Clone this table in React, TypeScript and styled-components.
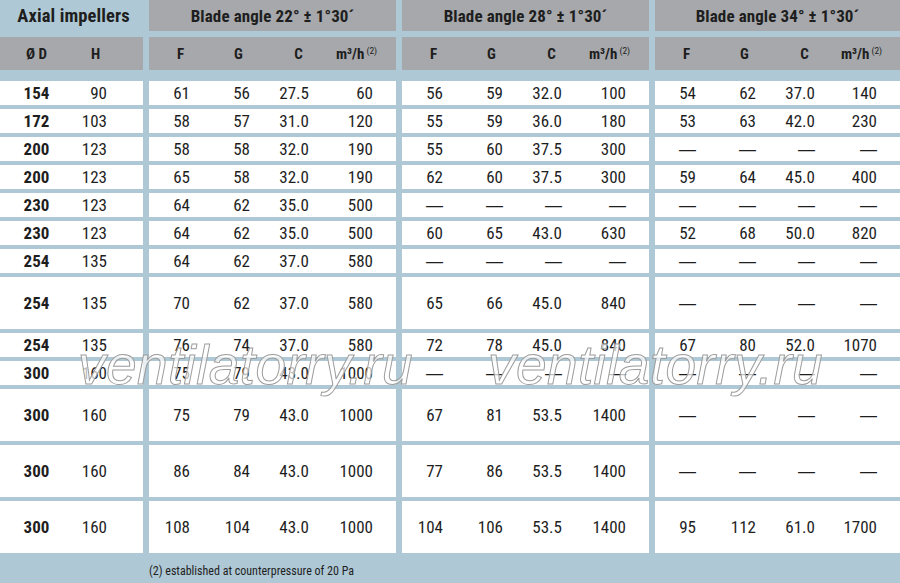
import React from "react";
import styled, { createGlobalStyle } from "styled-components";

const GlobalStyle = createGlobalStyle`
  html, body {
    margin: 0;
    padding: 0;
    background: #afc8d5;
  }
  body {
    font-family: Roboto, "Liberation Sans", sans-serif;
    font-stretch: 75%;
    color: #1e1e1e;
  }
`;

const Page = styled.div`
  position: relative;
  width: 900px;
  height: 583px;
  overflow: hidden;
  display: flex;
  flex-direction: column;
`;

const Row = styled.div<{ $h: number; $mb?: number }>`
  display: grid;
  grid-template-columns: 143px 247px 247px 1fr;
  column-gap: 6px;
  height: ${(p) => p.$h}px;
  margin-bottom: ${(p) => p.$mb ?? 4}px;
`;

const TopCell = styled.div<{ $plain?: boolean }>`
  display: flex;
  align-items: center;
  justify-content: center;
  background: ${(p) => (p.$plain ? "transparent" : "#a6a8ab")};
  font-weight: 700;
  font-size: ${(p) => (p.$plain ? 18.5 : 17)}px;
  letter-spacing: 0.1px;
  padding-left: ${(p) => (p.$plain ? 4 : 0)}px;
  white-space: nowrap;
`;

const Group = styled.div<{ $cols: string; $head?: boolean }>`
  display: grid;
  grid-template-columns: ${(p) => p.$cols};
  align-items: center;
  background: ${(p) => (p.$head ? "#a6a8ab" : "#ffffff")};
`;

const HeadCell = styled.div<{ $pr: number }>`
  text-align: center;
  padding-right: ${(p) => p.$pr}px;
  font-weight: 700;
  font-size: 15px;
  white-space: nowrap;
`;

const Sup = styled.sup`
  font-weight: 400;
  font-size: 9.5px;
  margin-left: 2px;
  vertical-align: 5px;
  line-height: 0;
`;

const Cell = styled.div<{ $align: "center" | "right"; $pr: number; $bold?: boolean }>`
  text-align: ${(p) => p.$align};
  padding-right: ${(p) => p.$pr}px;
  font-size: 17px;
  font-weight: ${(p) => (p.$bold ? 700 : 400)};
  white-space: nowrap;
`;

const Dash = styled.span`
  font-family: "Liberation Sans", sans-serif;
  font-stretch: 100%;
`;

const Footer = styled.div`
  flex: 1;
  padding: 11px 0 0 149px;
  font-size: 12px;
`;

const Watermark = styled.div<{ $left: number }>`
  position: absolute;
  top: 338px;
  left: ${(p) => p.$left}px;
  font-family: "Liberation Sans", Arial, sans-serif;
  font-stretch: 100%;
  font-style: italic;
  font-size: 55px;
  letter-spacing: 0.4px;
  line-height: 1;
  color: rgba(255, 255, 255, 0.7);
  -webkit-text-stroke: 1px #9c9c9c;
  pointer-events: none;
  white-space: nowrap;
`;

type V = string | number;
const D: V[] = ["—", "—", "—", "—"];

const rows: { d: number; h: number; g: V[][]; tall?: boolean }[] = [
  { d: 154, h: 90, g: [[61, 56, "27.5", 60], [56, 59, "32.0", 100], [54, 62, "37.0", 140]] },
  { d: 172, h: 103, g: [[58, 57, "31.0", 120], [55, 59, "36.0", 180], [53, 63, "42.0", 230]] },
  { d: 200, h: 123, g: [[58, 58, "32.0", 190], [55, 60, "37.5", 300], D] },
  { d: 200, h: 123, g: [[65, 58, "32.0", 190], [62, 60, "37.5", 300], [59, 64, "45.0", 400]] },
  { d: 230, h: 123, g: [[64, 62, "35.0", 500], D, D] },
  { d: 230, h: 123, g: [[64, 62, "35.0", 500], [60, 65, "43.0", 630], [52, 68, "50.0", 820]] },
  { d: 254, h: 135, g: [[64, 62, "37.0", 580], D, D] },
  { d: 254, h: 135, g: [[70, 62, "37.0", 580], [65, 66, "45.0", 840], D], tall: true },
  { d: 254, h: 135, g: [[76, 74, "37.0", 580], [72, 78, "45.0", 840], [67, 80, "52.0", 1070]] },
  { d: 300, h: 160, g: [[75, 79, "43.0", 1000], D, D] },
  { d: 300, h: 160, g: [[75, 79, "43.0", 1000], [67, 81, "53.5", 1400], D], tall: true },
  { d: 300, h: 160, g: [[86, 84, "43.0", 1000], [77, 86, "53.5", 1400], D], tall: true },
  { d: 300, h: 160, g: [[108, 104, "43.0", 1000], [104, 106, "53.5", 1400], [95, 112, "61.0", 1700]], tall: true },
];

const leftCols = "73px 1fr";
const angleCols = "63px 60px 59px 1fr";
const angles = ["22", "28", "34"];
const headPad = [0, 7, 6, 14];

const AngleHead = () => (
  <Group $cols={angleCols} $head>
    <HeadCell $pr={headPad[0]}>F</HeadCell>
    <HeadCell $pr={headPad[1]}>G</HeadCell>
    <HeadCell $pr={headPad[2]}>C</HeadCell>
    <HeadCell $pr={headPad[3]}>
      m³/h<Sup>(2)</Sup>
    </HeadCell>
  </Group>
);

export default function App() {
  return (
    <>
      <GlobalStyle />
      <Page>
        <Row $h={31} $mb={6}>
          <TopCell $plain>Axial impellers</TopCell>
          {angles.map((a) => (
            <TopCell key={a}>Blade angle {a}° ± 1°30´</TopCell>
          ))}
        </Row>
        <Row $h={33} $mb={11}>
          <Group $cols={leftCols} $head>
            <HeadCell $pr={0}>Ø D</HeadCell>
            <HeadCell $pr={25}>H</HeadCell>
          </Group>
          <AngleHead />
          <AngleHead />
          <AngleHead />
        </Row>
        {rows.map((r, i) => (
          <Row key={i} $h={r.tall ? 52 : 24} $mb={i === rows.length - 1 ? 0 : 4}>
            <Group $cols={leftCols}>
              <Cell $align="center" $pr={0} $bold>
                {r.d}
              </Cell>
              <Cell $align="right" $pr={36}>
                {r.h}
              </Cell>
            </Group>
            {r.g.map((vals, j) => (
              <Group key={j} $cols={angleCols}>
                {vals.map((v, k) => (
                  <Cell key={k} $align="right" $pr={k === 3 ? 23 : 22}>
                    {v === "—" ? <Dash>—</Dash> : v}
                  </Cell>
                ))}
              </Group>
            ))}
          </Row>
        ))}
        <Footer>(2) established at counterpressure of 20 Pa</Footer>
        <Watermark $left={78}>ventilatorry.ru</Watermark>
        <Watermark $left={488}>ventilatorry.ru</Watermark>
      </Page>
    </>
  );
}
